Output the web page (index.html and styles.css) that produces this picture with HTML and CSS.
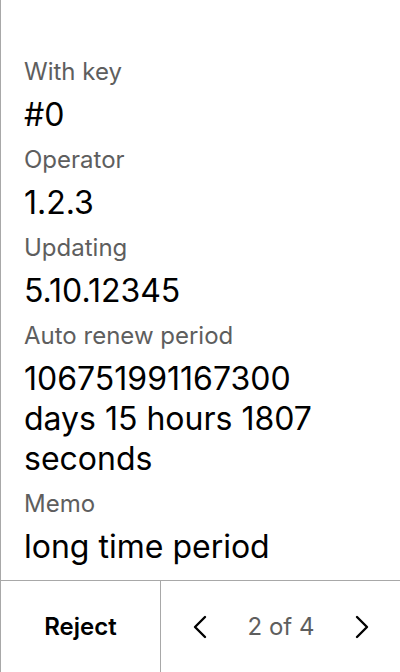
FILE: index.html
```html
<!DOCTYPE html>
<html>
<head>
<meta charset="utf-8">
<link rel="stylesheet" href="styles.css">
</head>
<body>
<div class="screen">
  <div class="details">
    <div class="item">
      <div class="label">With key</div>
      <div class="value">#0</div>
    </div>
    <div class="item">
      <div class="label">Operator</div>
      <div class="value">1.2.3</div>
    </div>
    <div class="item">
      <div class="label">Updating</div>
      <div class="value">5.10.12345</div>
    </div>
    <div class="item">
      <div class="label">Auto renew period</div>
      <div class="value">106751991167300 days 15 hours 1807 seconds</div>
    </div>
    <div class="item">
      <div class="label">Memo</div>
      <div class="value">long time period</div>
    </div>
  </div>
  <div class="footer">
    <div class="reject">Reject</div>
    <div class="pager">
      <svg class="chev" width="16" height="24" viewBox="0 0 16 24"><path d="M13 2 L3 12 L13 22" fill="none" stroke="#000" stroke-width="2.4" stroke-linecap="round" stroke-linejoin="round"/></svg>
      <span class="count">2 of 4</span>
      <svg class="chev" width="16" height="24" viewBox="0 0 16 24"><path d="M3 2 L13 12 L3 22" fill="none" stroke="#000" stroke-width="2.4" stroke-linecap="round" stroke-linejoin="round"/></svg>
    </div>
  </div>
</div>
</body>
</html>
```
FILE: styles.css
```css
html, body {
  margin: 0;
  padding: 0;
  background: #fff;
}
.screen {
  width: 400px;
  height: 672px;
  box-sizing: border-box;
  border-left: 1px solid #a8a8a8;
  display: flex;
  flex-direction: column;
  font-family: Inter, "Noto Sans", sans-serif;
  color: #000;
}
.details {
  flex: 1;
  padding: 57px 30px 0 23px;
  display: flex;
  flex-direction: column;
  gap: 10px;
}
.label {
  font-size: 24px;
  line-height: 29px;
  color: #5e5e5e;
}
.value {
  font-size: 32px;
  line-height: 40px;
  margin-top: 9px;
}
.footer {
  height: 92px;
  border-top: 1px solid #a8a8a8;
  display: flex;
  box-sizing: border-box;
}
.reject {
  width: 159px;
  border-right: 1px solid #a8a8a8;
  display: flex;
  align-items: center;
  justify-content: center;
  font-size: 24px;
  font-weight: 600;
}
.pager {
  flex: 1;
  display: flex;
  align-items: center;
  justify-content: space-between;
  padding: 0 30px 0 31px;
}
.count {
  font-size: 24px;
  color: #5e5e5e;
}
.chev {
  display: block;
}
```
